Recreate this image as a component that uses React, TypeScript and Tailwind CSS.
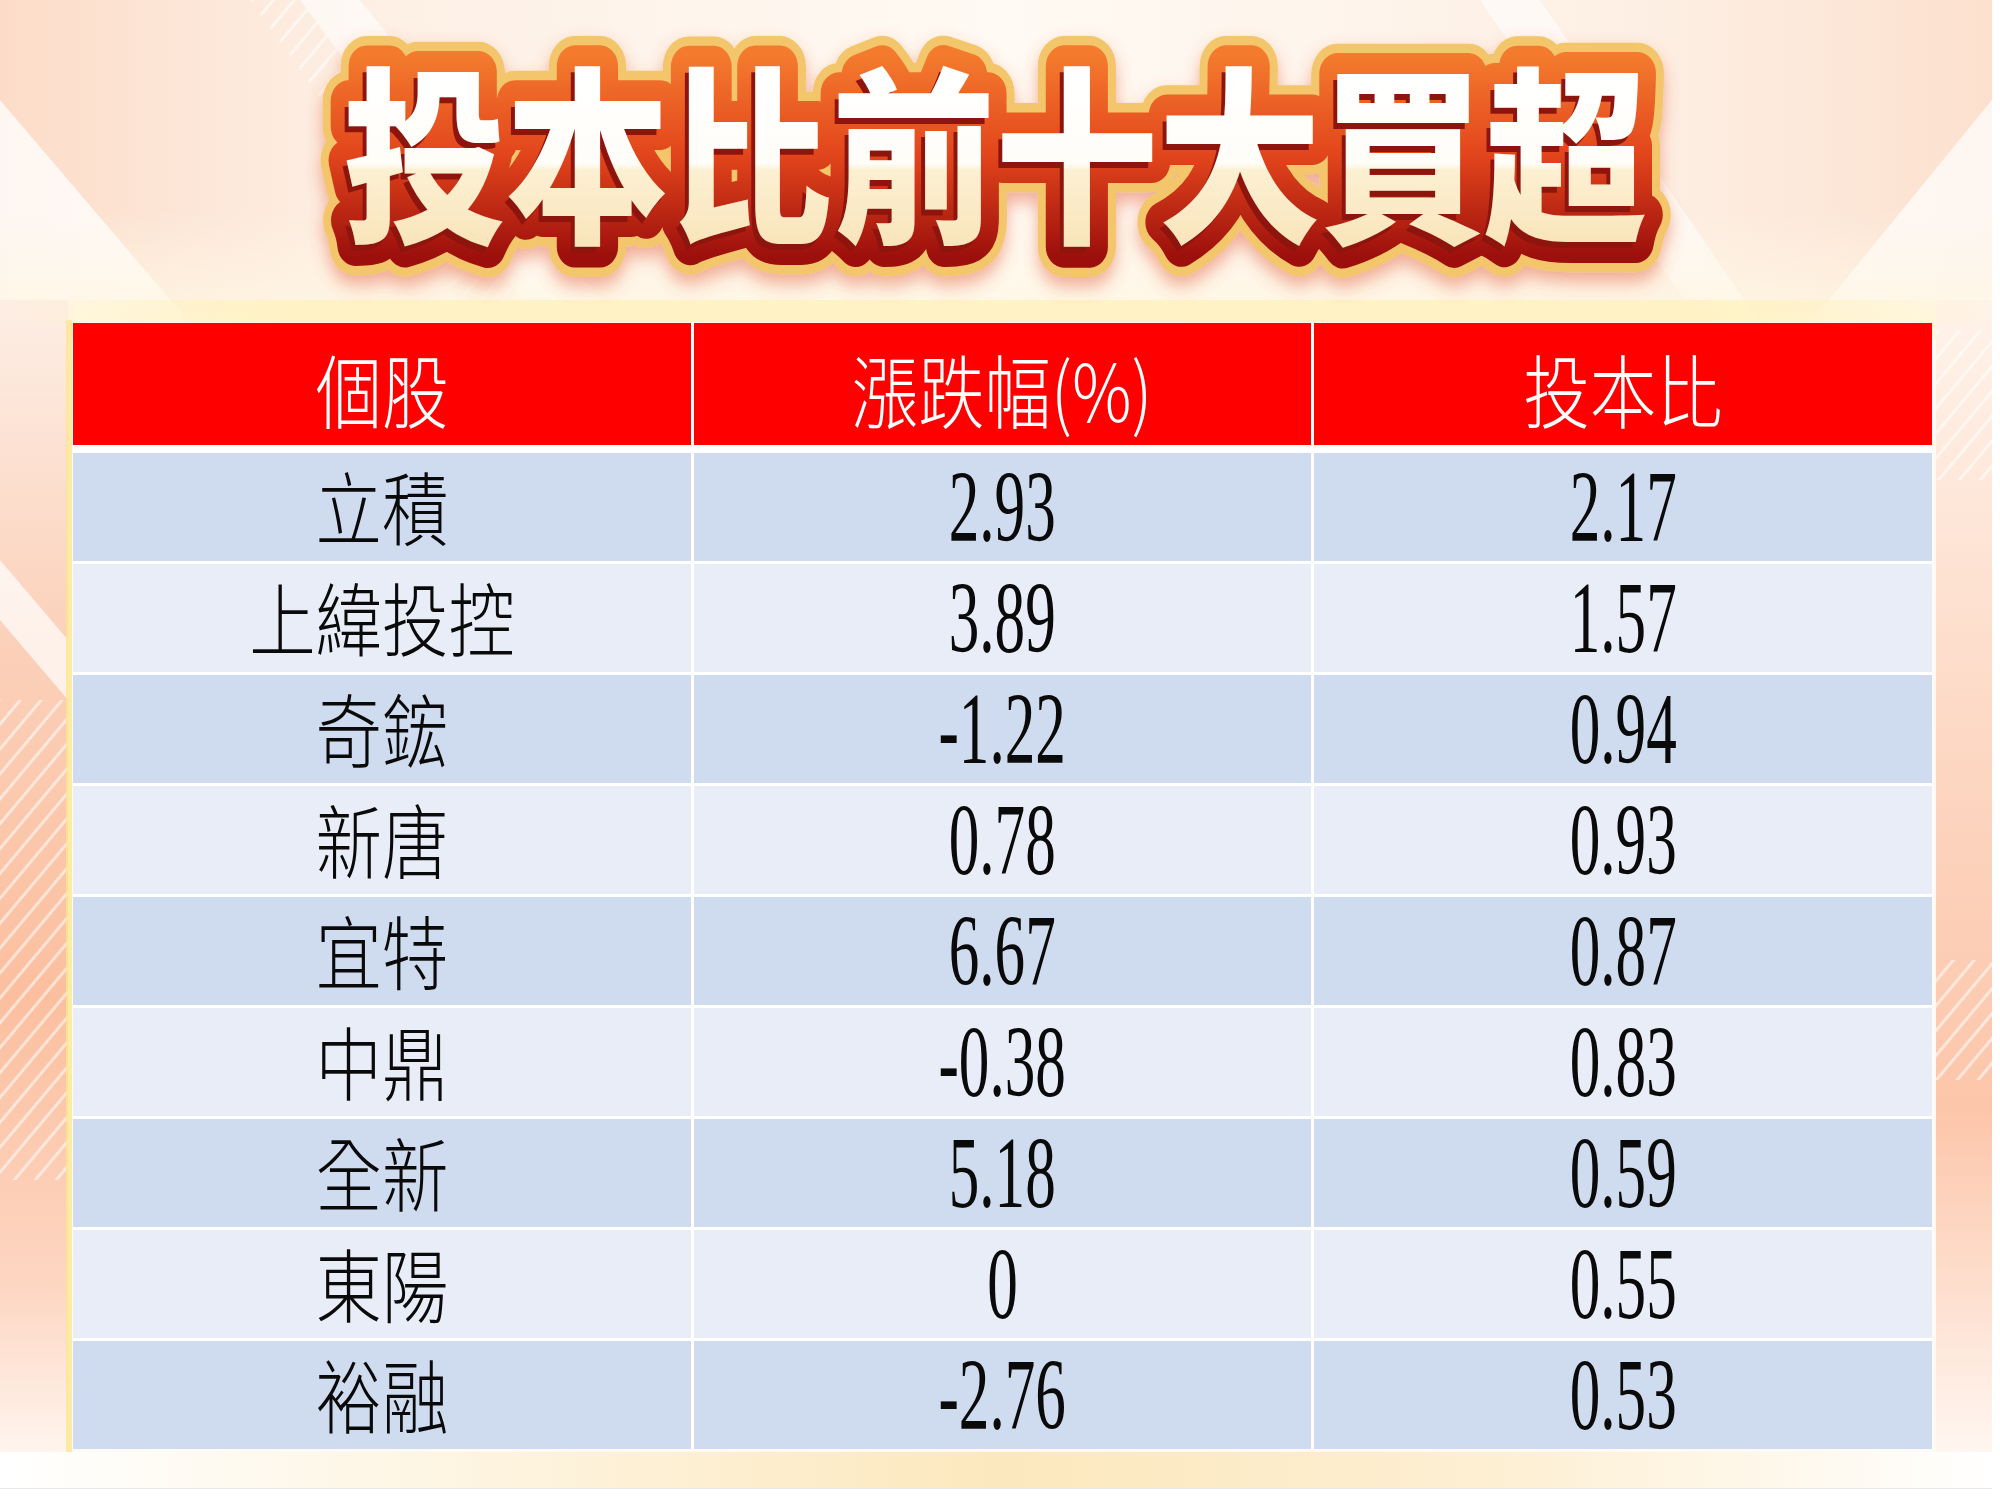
import React from 'react';

const rows = [
  { name: '立積', change: '2.93', ratio: '2.17' },
  { name: '上緯投控', change: '3.89', ratio: '1.57' },
  { name: '奇鋐', change: '-1.22', ratio: '0.94' },
  { name: '新唐', change: '0.78', ratio: '0.93' },
  { name: '宜特', change: '6.67', ratio: '0.87' },
  { name: '中鼎', change: '-0.38', ratio: '0.83' },
  { name: '全新', change: '5.18', ratio: '0.59' },
  { name: '東陽', change: '0', ratio: '0.55' },
  { name: '裕融', change: '-2.76', ratio: '0.53' },
];

const TITLE = '投本比前十大買超';

const Cjk = ({ children }: { children: React.ReactNode }) => (
  <span className="inline-block scale-x-[0.83] font-[family-name:Noto_Sans_CJK_TC,Noto_Sans_CJK_SC,sans-serif] text-[80px] font-extralight leading-none">
    {children}
  </span>
);

const Num = ({ children }: { children: React.ReactNode }) => (
  <span className="inline-block scale-x-[0.6] font-[family-name:Liberation_Serif,Times_New_Roman,serif] text-[102px] font-normal leading-none">
    {children}
  </span>
);

// light rays + side panels behind the table
const Backdrop = () => (
  <svg className="absolute left-0 top-0" width="2000" height="1500" viewBox="0 0 2000 1500">
    <defs>
      <linearGradient id="bgTop" x1="0" y1="0" x2="1" y2="0">
        <stop offset="0" stopColor="#fcdcc8" />
        <stop offset="0.18" stopColor="#fdefe4" />
        <stop offset="0.5" stopColor="#fffaf3" />
        <stop offset="0.82" stopColor="#fdefe4" />
        <stop offset="1" stopColor="#fce0cd" />
      </linearGradient>
      <linearGradient id="bgTopFade" x1="0" y1="0" x2="0" y2="1">
        <stop offset="0" stopColor="#fff8ea" stopOpacity="0" />
        <stop offset="1" stopColor="#fff6df" stopOpacity="1" />
      </linearGradient>
      <linearGradient id="bgSideL" x1="0" y1="0" x2="0" y2="1">
        <stop offset="0" stopColor="#fdeee5" />
        <stop offset="0.3" stopColor="#fbd0b9" />
        <stop offset="0.6" stopColor="#fbbf9f" />
        <stop offset="0.85" stopColor="#fdd6c2" />
        <stop offset="1" stopColor="#fff6f0" />
      </linearGradient>
      <linearGradient id="bgSideR" x1="0" y1="0" x2="0" y2="1">
        <stop offset="0" stopColor="#fff3ea" />
        <stop offset="0.45" stopColor="#fcd3bd" />
        <stop offset="0.7" stopColor="#fcc6aa" />
        <stop offset="1" stopColor="#fff7f2" />
      </linearGradient>
      <linearGradient id="bgBottom" x1="0" y1="0" x2="1" y2="0">
        <stop offset="0" stopColor="#ffffff" />
        <stop offset="0.3" stopColor="#fdf1d8" />
        <stop offset="0.5" stopColor="#fce8bd" />
        <stop offset="0.75" stopColor="#fdefd3" />
        <stop offset="1" stopColor="#ffffff" />
      </linearGradient>
      <linearGradient id="glowY" x1="0" y1="0" x2="1" y2="0">
        <stop offset="0" stopColor="#fff1b8" stopOpacity="0" />
        <stop offset="0.15" stopColor="#fff2bd" stopOpacity="0.8" />
        <stop offset="0.85" stopColor="#fff2bd" stopOpacity="0.8" />
        <stop offset="1" stopColor="#fff1b8" stopOpacity="0" />
      </linearGradient>
      <pattern id="stripes" width="16" height="16" patternUnits="userSpaceOnUse" patternTransform="rotate(40)">
        <rect width="3" height="16" fill="#ffffff" opacity="0.55" />
      </pattern>
    </defs>
    <rect width="2000" height="1500" fill="#fffaf5" />
    <rect width="2000" height="340" fill="url(#bgTop)" />
    <polygon points="0,100 190,323 0,323" fill="#ffffff" opacity="0.75" />
    <polygon points="300,0 360,0 620,323 540,323" fill="#ffffff" opacity="0.6" />
    <polygon points="250,0 300,0 540,323 480,323" fill="url(#stripes)" />
    <polygon points="1480,0 1540,0 1760,323 1700,323" fill="#ffffff" opacity="0.6" />
    <polygon points="2000,90 1810,323 2000,323" fill="#ffffff" opacity="0.7" />
    <rect x="0" y="210" width="2000" height="130" fill="url(#bgTopFade)" />
    <rect x="0" y="300" width="68" height="1160" fill="url(#bgSideL)" />
    <rect x="0" y="700" width="68" height="480" fill="url(#stripes)" />
    <polygon points="0,560 68,640 68,700 0,620" fill="#ffffff" opacity="0.7" />
    <rect x="1936" y="300" width="56" height="1160" fill="url(#bgSideR)" />
    <rect x="1936" y="330" width="56" height="150" fill="url(#stripes)" />
    <rect x="1936" y="960" width="56" height="120" fill="url(#stripes)" />
    <rect x="66" y="320" width="6" height="1135" fill="#fde68f" opacity="0.8" />
    <rect x="0" y="300" width="2000" height="22" fill="url(#glowY)" />
    <rect x="0" y="1452" width="2000" height="36" fill="url(#bgBottom)" />
    <rect x="0" y="1488" width="2000" height="12" fill="#ffffff" />
    <rect x="0" y="1488" width="2000" height="1" fill="#ebe7e3" />
    <rect x="1992" y="0" width="8" height="1500" fill="#ffffff" />
  </svg>
);

// banner title: one text, painted in layers (gold rim, red rim, dark bevel, cream face)
const Title = () => (
  <svg width="2000" height="323" viewBox="0 0 2000 323" className="block">
    <defs>
      <linearGradient id="tRed" gradientUnits="userSpaceOnUse" x1="0" y1="-150" x2="0" y2="25">
        <stop offset="0" stopColor="#f47b2e" />
        <stop offset="0.5" stopColor="#e2451c" />
        <stop offset="1" stopColor="#9c0f0c" />
      </linearGradient>
      <linearGradient id="tFill" gradientUnits="userSpaceOnUse" x1="0" y1="-135" x2="0" y2="12">
        <stop offset="0" stopColor="#ffffff" />
        <stop offset="0.54" stopColor="#fffdf8" />
        <stop offset="0.58" stopColor="#fcf0d2" />
        <stop offset="1" stopColor="#f9e5bc" />
      </linearGradient>
      <filter id="tGlow" x="-10%" y="-40%" width="120%" height="180%">
        <feDropShadow dx="0" dy="8" stdDeviation="8" floodColor="#e0502a" floodOpacity="0.45" />
      </filter>
      <text
        id="titleText"
        fontFamily='"Noto Sans CJK TC", "Noto Sans CJK SC", sans-serif'
        fontWeight={900}
        fontSize={163}
        textAnchor="middle"
      >
        {TITLE}
      </text>
    </defs>
    <g transform="translate(995 228) scale(1 1.16)">
      <use href="#titleText" fill="#f3c66c" stroke="#f3c66c" strokeWidth="52" strokeLinejoin="round" filter="url(#tGlow)" />
      <use href="#titleText" fill="url(#tRed)" stroke="url(#tRed)" strokeWidth="36" strokeLinejoin="round" />
      <use href="#titleText" x="-4" y="5" fill="#8e150d" />
      <use href="#titleText" fill="url(#tFill)" />
    </g>
  </svg>
);

const App = () => {
  return (
    <div className="relative h-[1500px] w-[2000px] overflow-hidden bg-[#fffaf5]">
      <Backdrop />
      <div className="relative flex flex-col">
        <Title />
        <div className="ml-[73px] flex w-[1859px] flex-col bg-white">
          <div className="grid h-[122px] grid-cols-3 gap-x-[3px] text-white">
            <div className="flex items-center justify-center bg-[#ff0000] pt-[6px]">
              <Cjk>個股</Cjk>
            </div>
            <div className="flex items-center justify-center bg-[#ff0000] pt-[6px]">
              <Cjk>漲跌幅(%)</Cjk>
            </div>
            <div className="flex items-center justify-center bg-[#ff0000] pt-[6px]">
              <Cjk>投本比</Cjk>
            </div>
          </div>
          {rows.map((row, i) => (
            <div
              key={row.name}
              className={`grid h-[108px] grid-cols-3 gap-x-[3px] text-[#0a0a0a] ${i === 0 ? 'mt-[8px]' : 'mt-[3px]'}`}
            >
              <div className={`flex items-center justify-center pb-[6px] ${i % 2 === 0 ? 'bg-[#cfdbee]' : 'bg-[#e8edf7]'}`}>
                <Cjk>{row.name}</Cjk>
              </div>
              <div className={`flex items-center justify-center ${i % 2 === 0 ? 'bg-[#cfdbee]' : 'bg-[#e8edf7]'}`}>
                <Num>{row.change}</Num>
              </div>
              <div className={`flex items-center justify-center ${i % 2 === 0 ? 'bg-[#cfdbee]' : 'bg-[#e8edf7]'}`}>
                <Num>{row.ratio}</Num>
              </div>
            </div>
          ))}
        </div>
      </div>
    </div>
  );
};

export default App;
